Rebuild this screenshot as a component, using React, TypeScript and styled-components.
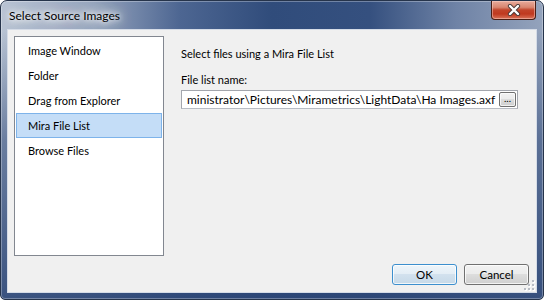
import React from "react";
import styled, { createGlobalStyle } from "styled-components";

const Global = createGlobalStyle`
  html, body { margin: 0; padding: 0; background: #ffffff; }
  body { font-family: "Lato", "Open Sans", sans-serif; font-size: 11px; color: #000; }
  * { box-sizing: border-box; }
`;

const Window = styled.div`
  width: 544px;
  height: 300px;
  border: 1px solid #26344b;
  border-radius: 7px 7px 5px 5px;
  overflow: hidden;
  display: flex;
  flex-direction: column;
  background:
    linear-gradient(180deg, rgba(44, 70, 118, 0) 0px, rgba(44, 70, 118, 0) 30px, rgba(44, 70, 118, 0.55) 140px, rgba(44, 70, 118, 0.9) 300px),
    linear-gradient(90deg, #b8c3d3 0%, #95a4bd 17%, #4d6692 33%, #304c7b 50%, #35507f 68%, #6f83a6 84%, #94a3bc 100%);
  box-shadow: inset 0 0 0 1px rgba(255, 255, 255, 0.3);
`;

const TitleBar = styled.div`
  height: 28px;
  display: flex;
  justify-content: space-between;
  align-items: flex-start;
  padding: 0 7px 0 7px;
`;

const Title = styled.div`
  margin-top: 7px;
  padding-left: 1px;
  font-family: "Lato", "Open Sans", sans-serif;
  font-size: 12px;
  line-height: 16px;
  color: #000;
  text-shadow: 0 0 5px #fff, 0 0 9px #fff, 0 0 14px rgba(255, 255, 255, 0.95), 0 0 20px rgba(255, 255, 255, 0.8);
`;

const CloseButton = styled.button`
  width: 45px;
  height: 19px;
  padding: 0;
  border: 1px solid #4a1e14;
  border-top: none;
  border-radius: 0 0 4px 4px;
  display: flex;
  align-items: center;
  justify-content: center;
  background: linear-gradient(180deg, #e8ab9c 0%, #d98670 35%, #c2442a 50%, #c0391f 72%, #d9735a 100%);
  box-shadow: inset 0 0 0 1px rgba(255, 220, 210, 0.45);
`;

const Client = styled.div`
  position: relative;
  flex: 1;
  margin: 0 6px 6px 6px;
  border: 1px solid #d5dce7;
  background: #f0f0f0;
  display: flex;
  flex-direction: column;
  padding: 6px 7px 7px 6px;
`;

const Main = styled.div`
  display: flex;
  gap: 17px;
  height: 220px;
`;

const ListBox = styled.div`
  width: 150px;
  height: 220px;
  border: 1px solid #828790;
  background: #fff;
  padding: 1px 1px 0 1px;
  display: flex;
  flex-direction: column;
`;

const ListItem = styled.div<{ $selected?: boolean }>`
  height: 25px;
  display: flex;
  align-items: center;
  padding-left: 11px;
  font-size: 11px;
  border: 1px solid ${(p) => (p.$selected ? "#7db3ea" : "transparent")};
  background: ${(p) => (p.$selected ? "#c4ddf7" : "transparent")};
`;

const Panel = styled.div`
  display: flex;
  flex-direction: column;
  padding-top: 10px;
`;

const Heading = styled.div`
  font-size: 11px;
  line-height: 16px;
`;

const FieldLabel = styled.div`
  margin-top: 10px;
  font-size: 11px;
  line-height: 16px;
`;

const TextBox = styled.div`
  margin-top: 2px;
  width: 337px;
  height: 19px;
  border: 1px solid #a3a6ad;
  border-bottom-color: #b8bcc4;
  background: #fff;
  display: flex;
  align-items: center;
  padding: 0 1px 0 5px;
`;

const TextValue = styled.div`
  flex: 1;
  overflow: hidden;
  white-space: nowrap;
  font-size: 12px;
  line-height: 16px;
`;

const BrowseButton = styled.button`
  width: 17px;
  height: 15px;
  padding: 0 0 3px 0;
  border: 1px solid #707070;
  border-radius: 2px;
  font-family: "Lato", sans-serif;
  font-size: 10px;
  line-height: 10px;
  color: #000;
  background: linear-gradient(180deg, #f2f2f2 0%, #ebebeb 50%, #dddddd 50%, #cfcfcf 100%);
  box-shadow: inset 0 0 0 1px rgba(255, 255, 255, 0.7);
  display: flex;
  align-items: flex-end;
  justify-content: center;
`;

const Footer = styled.div`
  margin-top: 8px;
  display: flex;
  justify-content: flex-end;
  gap: 7px;
`;

const DialogButton = styled.button<{ $default?: boolean }>`
  width: 65px;
  height: 21px;
  padding: 0;
  font-family: "Lato", "Open Sans", sans-serif;
  font-size: 11.5px;
  color: #000;
  border: 1px solid ${(p) => (p.$default ? "#3c8fce" : "#707070")};
  border-radius: 3px;
  background: ${(p) =>
    p.$default
      ? "linear-gradient(180deg, #eef5fa 0%, #e3edf5 50%, #d2e1ee 50%, #c6d9e8 100%)"
      : "linear-gradient(180deg, #f2f2f2 0%, #ebebeb 50%, #dddddd 50%, #cfcfcf 100%)"};
  box-shadow: inset 0 0 0 1px rgba(255, 255, 255, 0.75);
`;

const Grip = styled.svg`
  position: absolute;
  right: 1px;
  bottom: 1px;
`;

const items = ["Image Window", "Folder", "Drag from Explorer", "Mira File List", "Browse Files"];

export default function App() {
  return (
    <>
      <Global />
      <Window>
        <TitleBar>
          <Title>Select Source Images</Title>
          <CloseButton aria-label="Close">
            <svg width="14" height="12" viewBox="0 0 14 12">
              <path d="M3 2 L11 10 M11 2 L3 10" stroke="#4a3a38" strokeWidth="4.2" strokeLinecap="round" />
              <path d="M3 2 L11 10 M11 2 L3 10" stroke="#ffffff" strokeWidth="2.4" strokeLinecap="round" />
            </svg>
          </CloseButton>
        </TitleBar>
        <Client>
          <Main>
            <ListBox>
              {items.map((it) => (
                <ListItem key={it} $selected={it === "Mira File List"}>
                  {it}
                </ListItem>
              ))}
            </ListBox>
            <Panel>
              <Heading>Select files using a Mira File List</Heading>
              <FieldLabel>File list name:</FieldLabel>
              <TextBox>
                <TextValue>ministrator\Pictures\Mirametrics\LightData\Ha Images.axf</TextValue>
                <BrowseButton>...</BrowseButton>
              </TextBox>
            </Panel>
          </Main>
          <Footer>
            <DialogButton $default>OK</DialogButton>
            <DialogButton>Cancel</DialogButton>
          </Footer>
          <Grip width="11" height="11" viewBox="0 0 11 11">
            {[
              [8, 0],
              [8, 4],
              [4, 4],
              [8, 8],
              [4, 8],
              [0, 8],
            ].map(([x, y]) => (
              <g key={`${x}-${y}`}>
                <rect x={x + 1} y={y + 1} width="2" height="2" fill="#ffffff" />
                <rect x={x} y={y} width="2" height="2" fill="#b8bcc4" />
              </g>
            ))}
          </Grip>
        </Client>
      </Window>
    </>
  );
}
